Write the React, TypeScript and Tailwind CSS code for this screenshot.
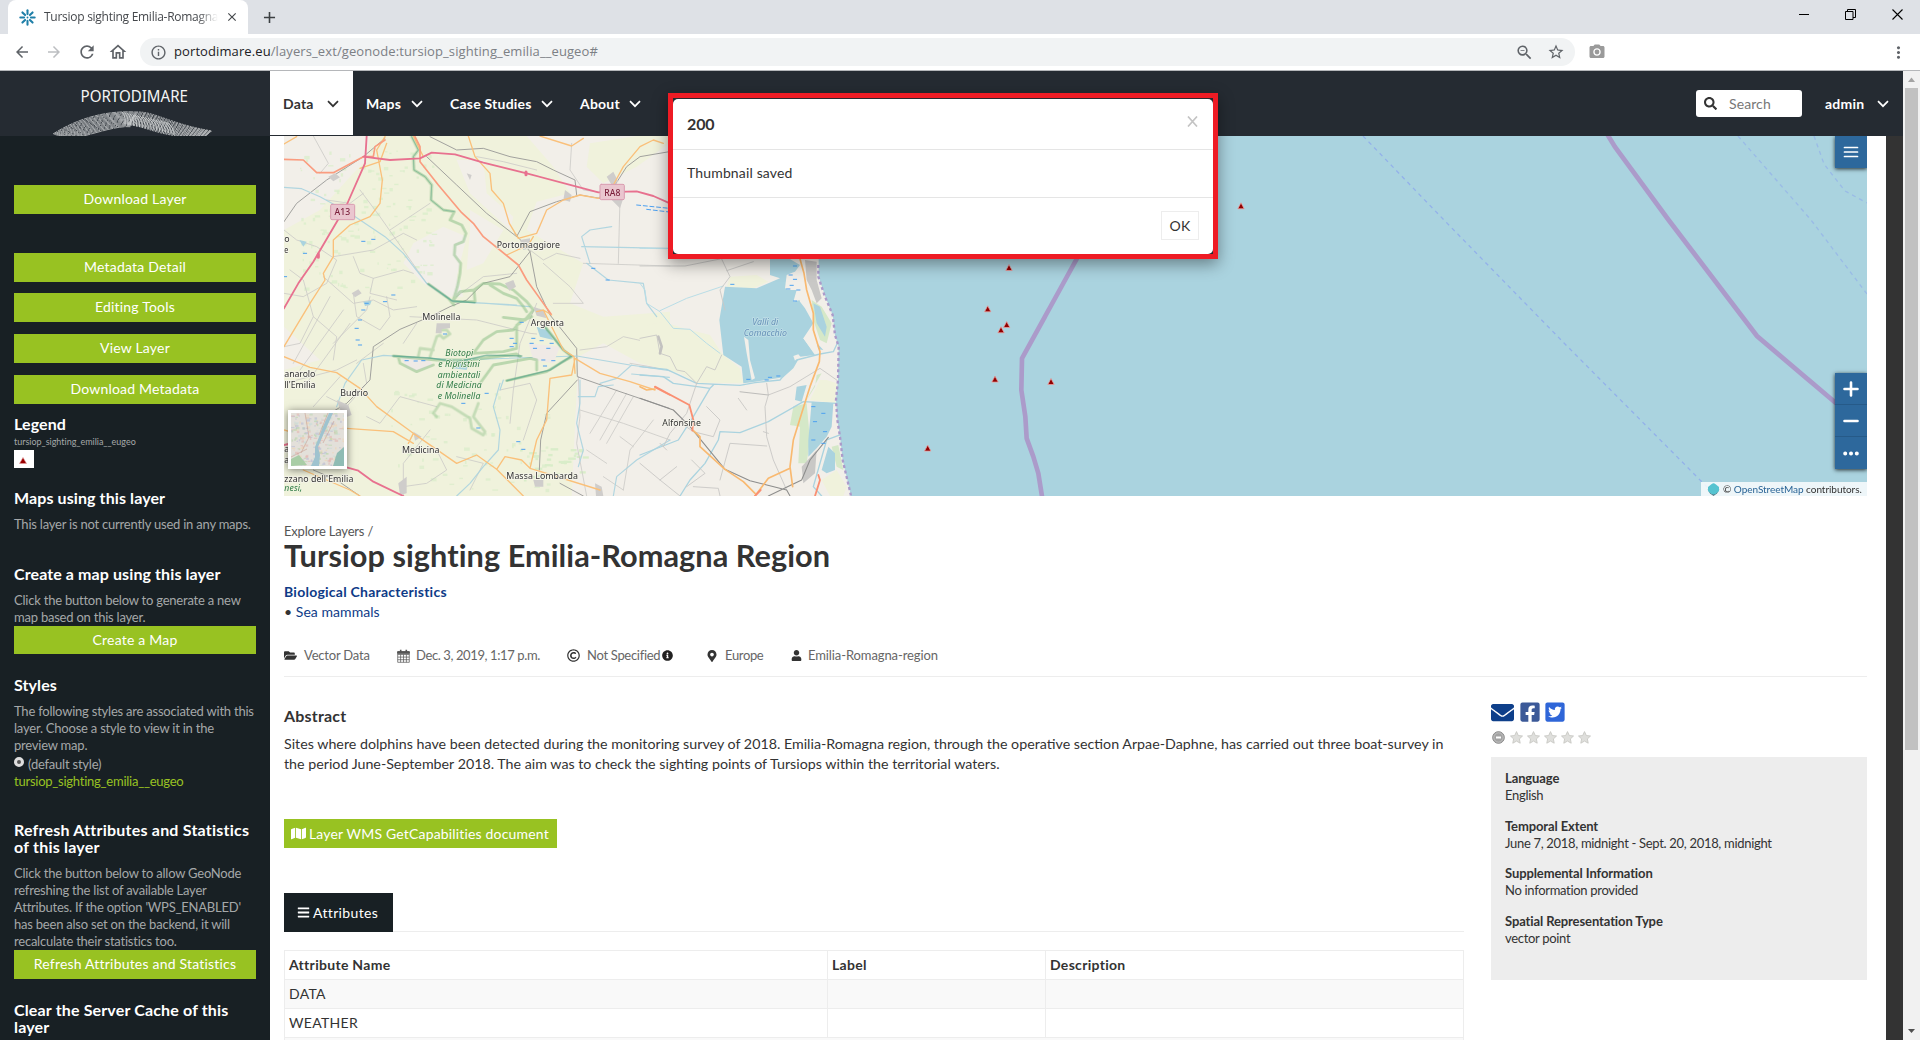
import type { ReactNode } from "react";
import {
  FaBars,
  FaEnvelope,
  FaFacebookSquare,
  FaFolderOpen,
  FaInfoCircle,
  FaMap,
  FaMapMarkerAlt,
  FaRegCopyright,
  FaSearch,
  FaTwitterSquare,
  FaUser,
} from "react-icons/fa";
import {
  MdAdd,
  MdArrowBack,
  MdArrowForward,
  MdCameraAlt,
  MdClose,
  MdInfoOutline,
  MdMoreVert,
  MdOutlineHome,
  MdOutlineZoomOut,
  MdRefresh,
  MdStarBorder,
} from "react-icons/md";

function Chevron() {
  return (
    <svg width="12" height="8" viewBox="0 0 12 8" fill="none" stroke="currentColor" strokeWidth="1.7">
      <path d="M1 1.2l5 5 5-5" />
    </svg>
  );
}

function Favicon() {
  return (
    <svg width="17" height="17" viewBox="-9 -9 18 18" stroke="#1f7fa8" strokeWidth="2.2" strokeLinecap="round">
      {[0, 45, 90, 135, 180, 225, 270, 315].map((a) => (
        <path key={a} d="M0 -3.6V-7.6" transform={`rotate(${a})`} />
      ))}
      <circle r="1" fill="#1f7fa8" stroke="none" />
    </svg>
  );
}

function BrowserChrome() {
  return (
    <div className="shrink-0 bg-[#dee1e6] font-['Open_Sans',sans-serif]">
      <div className="flex h-[34px] items-stretch">
        <div className="ml-2 flex w-60 items-center rounded-t-lg bg-white pl-[11px]">
          <Favicon />
          <div className="ml-2 w-[174px] overflow-hidden text-[12px] tracking-[-0.27px] whitespace-nowrap text-[#45484c] [mask-image:linear-gradient(to_right,black_88%,transparent)]">
            Tursiop sighting Emilia-Romagna
          </div>
          <MdClose className="ml-[7px] size-[14px] text-[#45484c]" />
        </div>
        <div className="flex w-[43px] items-center justify-center">
          <MdAdd className="size-[19px] text-[#3c4043]" />
        </div>
        <div className="ml-auto flex items-center pr-[17px] pb-[6px] text-black">
          <svg width="10" height="10" viewBox="0 0 10 10" stroke="currentColor">
            <path d="M0 5.5h10" />
          </svg>
          <svg className="ml-[36px]" width="11" height="11" viewBox="0 0 11 11" fill="none" stroke="currentColor">
            <path d="M.5 2.5h7.500v8h-7.500zM2.500 2.500v-2h8v8h-2.500" />
          </svg>
          <svg className="ml-[36px]" width="11" height="11" viewBox="0 0 11 11" fill="none" stroke="currentColor" strokeWidth="1.1">
            <path d="M.5 .5l10 10M10.500 .5l-10 10" />
          </svg>
        </div>
      </div>
      <div className="flex h-[37px] items-center border-b border-[#b5b7ba] bg-white pl-[13px] text-[#5f6368]">
        <MdArrowBack className="size-[18px]" />
        <MdArrowForward className="ml-[14px] size-[18px] text-[#bcbec1]" />
        <MdRefresh className="ml-[14px] size-[20px]" />
        <MdOutlineHome className="ml-[11px] size-[20px]" />
        <div className="ml-3 flex h-7 w-[1435px] items-center rounded-full bg-[#f1f3f4] pr-[10px] pl-[10px]">
          <MdInfoOutline className="size-[17px]" />
          <div className="ml-[7px] text-[13px] tracking-[0.1px] whitespace-nowrap text-[#7c8085]">
            <span className="text-[#202124]">portodimare.eu</span>/layers_ext/geonode:tursiop_sighting_emilia__eugeo#
          </div>
          <MdOutlineZoomOut className="ml-auto size-[19px]" />
          <MdStarBorder className="ml-[13px] size-[18px]" />
        </div>
        <MdCameraAlt className="ml-[13px] size-[18px] text-[#9a9a9a]" />
        <MdMoreVert className="mr-[12px] ml-auto size-[19px]" />
      </div>
    </div>
  );
}

function Logo() {
  const strands = Array.from({ length: 15 }, (_, i) => i);
  return (
    <svg width="270" height="65" viewBox="0 0 270 65">
      <text
        x="80.5"
        y="31"
        fontFamily="Noto Sans, sans-serif"
        fontSize="16.5"
        textLength="107.500"
        lengthAdjust="spacingAndGlyphs"
        fill="#f4f5f5"
      >
        PORTODIMARE
      </text>
      <g fill="none" stroke="#c9cccd">
        {strands.map((i) => (
          <path
            key={i}
            strokeWidth={0.8}
            strokeDasharray={`${5 + (i % 3) * 3} 0.7`}
            d={`M${53 + i * 1.1} ${63 + i * 0.4}C${72 + i * 1.3} ${51 + i * 0.95} ${100 + i * 1.1} ${39 + i * 1.100} ${136 - i * 0.4} ${41 + i * 1.05}`}
          />
        ))}
        {strands.map((i) => (
          <path
            key={`r${i}`}
            strokeWidth={0.8}
            strokeDasharray={`${2 + (i % 2)} 0.8`}
            d={`M${136 - i * 0.6} ${41 + i * 0.9}C${154 - i * 0.4} ${40 + i * 1.100} ${170 - i} ${53 + i * 0.9} ${212 - i * 0.6} ${60 + i * 0.5}`}
          />
        ))}
        {Array.from({ length: 18 }, (_, i) => (
          <path key={`h${i}`} strokeWidth="1" d={`M${122 + i * 2.6} ${41 + i * 0.600}q${4 + i * 0.2} 4 ${3 + i * 0.3} 12`} />
        ))}
      </g>
    </svg>
  );
}

function NavItem({ label, className }: { label: string; className: string }) {
  return (
    <div className={`flex h-[64px] items-center justify-between pt-[2px] text-[14px] leading-5 font-bold tracking-[0.22px] whitespace-nowrap ${className}`}>
      <span>{label}</span>
      <Chevron />
    </div>
  );
}

function Header() {
  return (
    <header className="flex h-[65px] shrink-0 bg-[#252b32] text-white">
      <Logo />
      <NavItem label="Data" className="w-[83px] bg-white pr-[14px] pl-[13px] text-[#333]" />
      <NavItem label="Maps" className="ml-[13px] w-[57px]" />
      <NavItem label="Case Studies" className="ml-[27px] w-[103px]" />
      <NavItem label="About" className="ml-[27px] w-[61px]" />
      <div className="mt-[19px] ml-auto flex h-[27px] w-[106px] items-center rounded-[3px] bg-white pl-2">
        <FaSearch className="size-[13px] text-[#333]" />
        <span className="ml-3 text-[14px] tracking-[0.1px] text-[#777]">Search</span>
      </div>
      <NavItem label="admin" className="mr-[14px] ml-[23px] w-[64px]" />
    </header>
  );
}

function SideButton({ children, className = "" }: { children: ReactNode; className?: string }) {
  return (
    <div className={`bg-[#98c222] text-center text-[14px] leading-[28px] tracking-[0.2px] text-white ${className}`}>
      {children}
    </div>
  );
}

function SideHeading({ children, className = "" }: { children: ReactNode; className?: string }) {
  return (
    <h4 className={`text-[16px] leading-[17px] font-bold tracking-[0.1px] whitespace-nowrap text-white ${className}`}>
      {children}
    </h4>
  );
}

function SideText({ children, className = "" }: { children: ReactNode; className?: string }) {
  return (
    <p className={`text-[13px] leading-[17px] tracking-[-0.22px] whitespace-nowrap text-[#a5a8a9] ${className}`}>
      {children}
    </p>
  );
}

function Sidebar() {
  return (
    <aside className="w-[270px] shrink-0 bg-[#182024] px-[14px] pt-[49px]">
      <SideButton className="h-[29px]">Download Layer</SideButton>
      <SideButton className="mt-[39px] h-[29px]">Metadata Detail</SideButton>
      <SideButton className="mt-[11px] h-[29px]">Editing Tools</SideButton>
      <SideButton className="mt-[12px] h-[29px]">View Layer</SideButton>
      <SideButton className="mt-[12px] h-[29px]">Download Metadata</SideButton>
      <SideHeading className="mt-[11px]">Legend</SideHeading>
      <p className="mt-1 text-[9px] leading-3 tracking-[-0.02px] text-[#a5a8a9]">tursiop_sighting_emilia__eugeo</p>
      <div className="mt-[2px] flex h-[18px] w-[20px] items-center justify-center bg-white">
        <svg className="mt-[3px] mr-[2px]" width="8" height="7" viewBox="0 0 8 7">
          <path d="M4 0.500L7.500 6.500H0.500z" fill="#900" stroke="#e9a0a0" strokeWidth="0.6" />
        </svg>
      </div>
      <SideHeading className="mt-[21px]">Maps using this layer</SideHeading>
      <SideText className="mt-[10px]">This layer is not currently used in any maps.</SideText>
      <SideHeading className="mt-[32px]">Create a map using this layer</SideHeading>
      <SideText className="mt-[10px]">
        Click the button below to generate a new
        <br />
        map based on this layer.
      </SideText>
      <SideButton className="h-[28px]">Create a Map</SideButton>
      <SideHeading className="mt-[22px]">Styles</SideHeading>
      <SideText className="mt-[10px]">
        The following styles are associated with this
        <br />
        layer. Choose a style to view it in the
        <br />
        preview map.
      </SideText>
      <div className="mt-[2px] flex h-[17px]">
        <span className="mt-px mr-1 size-[10px] rounded-full border-[3px] border-[#dedede] bg-[#555]" />
        <SideText>(default style)</SideText>
      </div>
      <p className="text-[13px] leading-[17px] tracking-[-0.24px] text-[#98c222]">tursiop_sighting_emilia__eugeo</p>
      <SideHeading className="mt-[31px] tracking-[0.22px]">
        Refresh Attributes and Statistics
        <br />
        of this layer
      </SideHeading>
      <SideText className="mt-[10px]">
        Click the button below to allow GeoNode
        <br />
        refreshing the list of available Layer
        <br />
        Attributes. If the option 'WPS_ENABLED'
        <br />
        has been also set on the backend, it will
        <br />
        recalculate their statistics too.
      </SideText>
      <SideButton className="h-[29px]">Refresh Attributes and Statistics</SideButton>
      <SideHeading className="mt-[22px] tracking-[0.15px]">
        Clear the Server Cache of this
        <br />
        layer
      </SideHeading>
    </aside>
  );
}

const sightings: [number, number][] = [
  [725, 131.7],
  [703.7, 173],
  [722.7, 188.7],
  [717, 194],
  [711, 243.3],
  [767, 245.7],
  [643.700, 312.300],
  [957, 70],
];

/* Deterministic speckle used for tree cover, wetland ticks and overview texture. */
function scatter(count: number, w: number, h: number, seed: number): [number, number][] {
  let s = seed;
  const next = () => {
    s = (s * 16807) % 2147483647;
    return s / 2147483647;
  };
  return Array.from({ length: count }, () => [next() * w, next() * h] as [number, number]);
}

function WestMap() {
  return (
    <g transform="translate(-14,-6) scale(0.33333)" fill="none" strokeLinejoin="round" strokeLinecap="round">
      <path
        fill="#f0f2dc"
        d="M300 18H770L850 110L900 190L800 215L770 300L940 400L900 520L1000 560L1200 545V690L1110 700L1000 640L925 680L905 1098H42V720L150 690L42 590V300L150 240L250 130L290 90z"
      />
      <path fill="#f2efe9" d="M430 340L520 290L590 320L560 440L580 500L520 500L460 460L400 400zM560 90L640 90L650 190L730 260L720 300L600 190zM600 240L700 300L640 400L590 420L600 300z" />
      <path fill="#f0f2dc" d="M960 40L1100 18H1198V40L1100 110L1000 160L950 110z" />
      <g fill="#d9edc9" stroke="none">
        {scatter(150, 440, 520, 77).map(([x, y], i) => (
          <rect key={i} x={90 + x * 0.9} y={60 + y * 0.8} width={4 + (i % 5) * 3} height={4 + (i % 3) * 3} opacity="0.75" />
        ))}
        {scatter(70, 480, 300, 991).map(([x, y], i) => (
          <rect key={i} x={360 + x} y={780 + y} width={5 + (i % 5) * 3} height={4 + (i % 3) * 3} opacity="0.700" />
        ))}
        {scatter(30, 200, 100, 31).map(([x, y], i) => (
          <rect key={i} x={750 + x} y={950 + y} width={8 + (i % 4) * 5} height={7} />
        ))}
      </g>
      <g stroke="#cccbc8" strokeWidth="2.5">
        <path d="M42 300L80 330L140 350L200 390L170 460L100 500L42 490M270 180L330 260L470 460M280 190L240 220L170 210M360 300L480 220M130 18L175 100L150 130M190 380L310 360L400 310L440 330M250 380L270 430L310 445L400 420L430 430M60 420L100 450L130 560L90 640L42 650M160 440L250 520L310 510L370 540L440 530M250 490L260 560L330 600L360 560L350 500M130 560L200 620L190 690M190 640L290 540L300 500M310 445L300 490L380 510M70 700L180 500M90 720L220 540M110 760L240 580" />
        <path d="M42 760L200 720L260 690M130 830L210 740M170 800L230 830L290 760L280 700M480 900L400 1000L400 1098M500 960L530 1020L470 1060L400 1070M290 860L330 880L390 800L500 830M420 560L620 570L780 610L800 612M800 520L750 640L730 780L720 880M560 500L640 440L740 430M440 580L400 640M340 640L260 700M690 780L780 760L800 810L760 930M560 980L640 1000L600 1080" />
        <path d="M905 40L900 120L940 180L1010 190M1050 205L1045 400M940 400L1200 408M780 360L820 390L860 370L930 385M820 400L900 470L940 520L850 520M930 660L1010 650L1060 620L1150 640L1160 680M1200 720L1080 700M925 740L930 860L920 940L950 1098M1070 790L990 930M1090 800L1010 940M1040 780L960 910M930 840L1060 880L1200 930M950 960L1010 1000M1050 920L1090 950M1000 1040L1060 1080M1150 870L1080 960L1060 1080M620 80L700 95L800 120" />
      </g>
      <g stroke="#9b9b99" strokeWidth="2.800">
        <path d="M42 275L80 220L170 150L280 80L345 25M470 80L560 165L650 250L740 320M740 320L780 245L860 215L930 195L990 205M735 310L780 365L720 440L640 460L590 510L540 530L480 560L390 598L310 650L300 750L230 820L180 850M780 365L800 470L840 555L920 655L922 740L1050 785L1198 835M922 750L830 850L812 930L808 1020M480 20L560 60L640 55L720 80L800 95L850 120L915 150L920 195M1035 165L1070 110L1110 80L1198 65M130 1020L200 1050L270 1098M870 1060L940 1098" />
      </g>
      <g stroke="#aad3df" strokeWidth="3.5">
        <path d="M42 172L95 176L150 200L240 250L345 320L400 370L470 460L550 515L740 525M200 830L225 760L275 690L340 676L560 690L920 678L1080 705L1200 722M560 515L650 520L780 530M690 760L670 830L690 900L685 960L640 1010L600 1060L560 1098M690 780L700 750M930 750L930 820L920 880L940 960L925 1010M925 800L975 800L985 770L1030 765M1085 705L1040 745L990 760M1085 732L1198 742M1025 290L960 300L935 320L960 400M950 400L1015 450L1120 460L1130 520L1160 560M1200 930L1100 990L1040 1040L1030 1098M935 350L1198 355" opacity="0.9" />
      </g>
      <path fill="#aad3df" d="M800 590L830 600L850 630L810 620zM88 330L110 335L100 350zM280 515L305 512L300 525L285 528zM560 700L600 690L590 720L550 715z" />
      <path fill="#efeae6" d="M395 685L470 680L490 705L440 722L410 715z M775 640L870 650L850 700L790 690z" />
      <g stroke="#85bc80" opacity="0.500" strokeWidth="8.500">
        <path d="M425 20L445 60L430 80L432 120L465 140L485 165L483 210L520 240L553 245L540 270L575 285L588 310L580 335L555 345L553 375L572 400L570 430L562 470L550 510" />
        <path d="M475 462L500 480L535 505L552 525M550 510L570 485L612 480L615 515L550 515M612 480L640 460L690 462L730 480L770 515L790 540L765 570L700 562M660 465L700 490L740 505L760 530L770 545" />
        <path d="M370 678L500 690L600 690L740 672L750 680M750 580L740 585L740 655L700 665L610 670L640 630L680 605L730 600L750 575L785 560M825 590L880 660L905 680L870 700L830 725L710 752M385 682L390 700L440 725L490 705M630 760L670 705L780 685L800 690L800 720" />
        <path d="M510 600L530 600L540 612L520 625L510 615L500 620L480 680M445 678L450 655L490 660M500 860L490 850L510 820L545 830L600 865L605 895L640 915L645 905L610 860L625 820" opacity="0.800" />
      </g>
      <g stroke="#4e9e86" strokeWidth="4.500" opacity="0.600">
        <path d="M475 462L545 512L615 518M370 678L480 684L560 696L650 676L755 678M710 752L840 720L905 678L880 660L825 592" />
        <path d="M425 20L445 60L430 80L432 120L465 140L485 165L483 210L520 240L553 245" strokeWidth="3" opacity="0.700" />
      </g>
      <g stroke="#4ba0f0" strokeWidth="3">
        {[
          [40, 440], [275, 334], [305, 328], [100, 370], [285, 520], [365, 495], [340, 515], [255, 595], [265, 570], [258, 630], [265, 645], [405, 692], [432, 693], [455, 692], [520, 612], [720, 625], [730, 640], [785, 625], [810, 632], [840, 640], [790, 655], [830, 655], [815, 690], [845, 692], [820, 708], [780, 640], [620, 894], [575, 820], [645, 790], [740, 935], [755, 958], [965, 415], [1008, 450], [275, 540], [720, 650], [750, 577],
        ].map(([x, y], i) => (
          <path key={i} d={`M${x} ${y}h10`} />
        ))}
        <path d="M1100 225L1198 235M1130 238L1198 246" strokeDasharray="12 8" />
      </g>
      <g fill="#cfcdcb" stroke="none">
        <path d="M175 140l20 -10l15 12l-20 12zM200 810l35 15l10 30l-25 10zM500 580h40v14l-25 4v12h-18zM750 330l30 -5v30l-20 5zM790 530l30 10l10 25l-30 -8zM1010 140l20 -15l15 30l-20 10zM1020 205h40l-10 30zM430 905l25 15l-20 12zM385 1060l25 -20v50l-20 5zM790 1050h30v20h-25zM1165 620l15 5l8 50l-20 -10zM975 1060l20 10l5 28h-22zM705 460l25 -10l8 20l-20 12zM245 490l20 -12l10 12l-20 12zM885 180l20 15l-5 20l-20 -5zM590 130l15 5l-5 15z" />
      </g>
      <g stroke="#fac07a" strokeWidth="4">
        <path d="M42 650L120 520L165 450L160 430L190 380L190 330L240 285L300 260L330 220L337 150L320 60L345 20M42 42L80 20M270 115L330 95L350 40M595 18L615 80L660 130L665 180L700 220L718 280L745 325L800 310L830 240L880 210L930 195M930 195L985 205L1000 195M1030 165L1060 110L1110 50L1150 30L1180 40M710 375L775 345L790 320M42 680L120 712L200 728L270 775L320 830L430 910L560 1000L620 975L680 1018L760 1098M230 895L370 905L430 940M430 910L415 940M680 1018L705 980L755 990L780 1015L990 1080M780 1015L800 930L830 870L840 745L905 735L915 685L990 730L1080 755L1155 780M820 540L850 600L880 660L912 680L915 730M430 18L460 80M810 18L905 48L940 25M800 545L820 540L845 555M42 900L60 905M100 1020L240 1080L270 1098" />
      </g>
      <g stroke="#fa9c7f" strokeWidth="5">
        <path d="M42 88L100 90L140 128L190 128L280 80L310 80L315 50L345 30M435 20L450 50L450 95L505 165L575 248L610 280L640 320L745 405L770 450L843 552M1155 772L1200 795" />
      </g>
      <g stroke="#e8718f" strokeWidth="5.500">
        <path d="M290 18L285 100L230 225L130 395L85 460L42 535M280 80L360 90L450 85L485 68L555 73L640 98L770 130L920 170L985 187L1100 184L1150 198L1200 220M230 1012L265 1022L310 1055L400 1098M42 945L55 942" />
        <path d="M145 372v10M768 126v8" strokeWidth="9" />
      </g>
      <g>
        <rect x="182" y="223" width="72" height="46" rx="4" fill="#eac6cf" stroke="#d99cb0" strokeWidth="3" />
        <rect x="990" y="163" width="73" height="46" rx="4" fill="#eac6cf" stroke="#d99cb0" strokeWidth="3" />
        <g fill="#7a1f3b" fontFamily="Noto Sans, sans-serif" fontSize="26" textAnchor="middle" fontWeight="500">
          <text x="217" y="256">A13</text>
          <text x="1027" y="197">RA8</text>
        </g>
      </g>
      <g fontFamily="Noto Sans, sans-serif" fontSize="26.500" fill="#333" stroke="#f6f5ec" strokeWidth="5" paintOrder="stroke">
        <text x="680" y="353" textLength="190">Portomaggiore</text>
        <text x="457" y="569" textLength="114">Molinella</text>
        <text x="782" y="588" textLength="100">Argenta</text>
        <text x="211" y="799" textLength="83">Budrio</text>
        <text x="396" y="968" textLength="112">Medicina</text>
        <text x="709" y="1048" textLength="215">Massa Lombarda</text>
        <text x="43" y="740" textLength="93">anarolo</text>
        <text x="43" y="773" textLength="93">ll'Emilia</text>
        <text x="43" y="336">o</text>
        <text x="43" y="368" textLength="12" lengthAdjust="spacingAndGlyphs">e</text>
        <text x="43" y="966">ar</text>
        <text x="43" y="1000">a</text>
        <text x="43" y="1055" textLength="207">zzano dell'Emilia</text>
      </g>
      <g fontFamily="Noto Sans, sans-serif" fontSize="26" fontStyle="italic" fill="#2f7a45" stroke="#eef3de" strokeWidth="4" paintOrder="stroke">
        <text x="526" y="679" textLength="84">Biotopi</text>
        <text x="505" y="711" textLength="124">e Ripristini</text>
        <text x="503" y="743" textLength="128">ambientali</text>
        <text x="499" y="775" textLength="136">di Medicina</text>
        <text x="503" y="808" textLength="128">e Molinella</text>
        <text x="43" y="1083" textLength="54">nesi,</text>
      </g>
    </g>
  );
}

function CoastMap() {
  return (
    <g transform="translate(356,104) scale(0.33333)" fill="none" strokeLinejoin="round" strokeLinecap="round">
      <path fill="#f0f2dc" d="M0 260L70 245L130 265L210 285L245 340L300 385L310 430L170 428L120 400L0 370zM270 110L350 105L385 125L340 145L260 140z" />
      <path
        fill="#aad3df"
        d="M536 -330V75L536 110L556 170L578 225L585 285L596 320L594 420L588 480L592 540L600 590L608 660L636 780H4000V-330z"
      />
      <path
        fill="#aad3df"
        d="M390 57H450L480 75L465 95L440 105L435 145L470 150L480 185L495 205L520 250L490 295L525 345L480 350L460 385L430 412L345 425L310 430L305 380L250 345L238 240L255 140L350 145L420 115L390 105z"
      />
      <path fill="#f2efe9" d="M312 290L325 300L330 360L345 415L335 420L320 340zM490 295L525 275L538 320L535 345L520 335zM440 130L450 110L475 100L480 180L460 185L470 150L440 150zM460 348L475 343L485 355L465 362z" />
      <path fill="#d5e8c8" d="M515 180L545 200L575 250L560 310L540 300L520 240zM545 400L510 460L490 500L500 480L525 440L530 405zM460 500L500 490L510 600L500 670H475L480 560L450 555z" />
      <path fill="#f0f2dc" d="M560 420L590 430L585 490L510 480L540 420zM545 720L590 690L620 740L610 768H570z" />
      <path fill="#d5e8c8" d="M575 620L595 615L610 690L590 680z" />
      <path fill="#aad3df" d="M520 190L540 200L560 260L555 290L530 250zM470 440L500 435L485 485L465 480zM515 485L580 490L575 560L560 590L530 625L505 650V600zM565 620L585 640V690L560 700L545 690zM530 308L550 330L535 328z" />
      <path fill="#c9c8c6" d="M495 60L530 65L530 120L545 175L530 190L515 150L500 120zM485 680L530 630L525 700L490 730z" />
      <g stroke="#aad3df" strokeWidth="4">
        <path d="M0 380L80 388L170 430L300 436L345 428L420 420L470 360L540 342L580 335L592 310M0 405L70 410L100 430L210 445L220 435M210 445L160 530L115 600L0 645M120 768L150 720L195 670L235 600L240 575L300 578L385 545L490 485L590 490M545 768L520 740L560 600L600 585" />
      </g>
      <g stroke="#b9dde6" strokeWidth="3">
        <path d="M0 25L80 26M0 130L15 150L20 190L60 215L100 265L150 268L200 310L240 340M60 212L140 175L250 138" />
      </g>
      <g stroke="#c8c7c5" strokeWidth="2.700">
        <path d="M0 78H135L240 57M245 57L270 110L240 150L255 210M260 92L340 65M0 295L50 285L60 340L90 350L110 390L135 395L170 430L200 380L225 390L245 345M170 430L140 520L90 580L70 620M200 500L240 540L220 590L160 575L110 540M385 465L375 500L380 590L400 660L440 750M295 475L320 510M240 720L270 610L380 618M155 660L195 700L140 740M0 670L60 720L120 768M60 720L110 680M380 430L385 465L450 440L540 385L590 420M60 610L80 630M370 575L385 580M160 740L235 745L240 768" />
      </g>
      <path stroke="#c3c2c0" strokeWidth="8" d="M55 290L65 320L60 340" />
      <g stroke="#8d8d8c" strokeWidth="3.200">
        <path d="M0 475L100 510L150 560L255 688L330 722L440 750L450 768M385 768L485 720L510 660L565 592" />
        <path d="M300 455L385 465" stroke="#bdbcba" />
      </g>
      <g stroke="#f9b970" strokeWidth="5">
        <path d="M480 57L492 100L500 150L520 220V270L540 335L538 365L510 440L485 520L460 600L450 680L458 740M450 685L385 715L345 768M160 572L180 590V620L255 688L310 725L345 760M0 440L20 450L45 447" />
      </g>
      <path stroke="#fa8f72" strokeWidth="5.500" d="M45 440L148 495L160 540L157 572M345 768L362 750M525 768L540 720L535 705" />
      <g stroke="#4ba0f0" strokeWidth="3">
        {[
          [460, 78], [447, 105], [460, 118], [450, 136], [470, 150], [460, 183], [272, 133], [320, 418], [375, 420], [385, 412], [410, 408], [515, 500], [545, 520], [520, 545], [550, 575], [515, 600], [440, 147], [545, 610],
        ].map(([x, y], i) => (
          <path key={i} d={`M${x} ${y}h10`} />
        ))}
      </g>
      <path
        stroke="#ab9bca"
        strokeWidth="7"
        strokeDasharray="9 8"
        strokeLinecap="butt"
        d="M535 75V110L553 165L578 225L585 285L596 320L594 420L588 480L592 540L600 590L608 660L636 780"
      />
      <path stroke="#ab9bca" strokeWidth="14" strokeLinecap="butt" d="M1340 0L1310 57L1146 355L1144 450L1156 530L1160 595L1180 650L1195 700L1207 775" />
      <text x="125" y="558" textAnchor="middle" fill="#333" stroke="#f6f5ec" strokeWidth="5" paintOrder="stroke" fontFamily="Noto Sans, sans-serif" fontSize="26.500" textLength="116">
        Alfonsine
      </text>
      <g fill="#6591b8" stroke="#c3e0e8" strokeWidth="4" paintOrder="stroke" fontFamily="Noto Sans, sans-serif" fontSize="26.500" fontStyle="italic" textAnchor="middle">
        <text x="376" y="255" textLength="78">Valli di</text>
        <text x="376" y="287" textLength="130">Comacchio</text>
      </g>
    </g>
  );
}

function OverviewThumb() {
  return (
    <svg width="53" height="53" viewBox="0 0 53 53">
      <rect width="53" height="53" fill="#e3e0da" />
      {scatter(260, 53, 53, 4242).map(([x, y], i) => (
        <rect
          key={i}
          x={x}
          y={y}
          width={1.5 + (i % 3)}
          height={1.2 + (i % 2)}
          opacity="0.600"
          fill={i % 5 === 0 ? "#b9d6ac" : i % 5 === 1 ? "#e3b5b0" : i % 5 === 2 ? "#b9bbd4" : i % 5 === 3 ? "#eed3b4" : "#c9dcd8"}
        />
      ))}
      <path d="M38 0L31 16L28 24L24 34L24 44L20 53H28L29 42L27 34L33 20L42 0z" fill="#9fc3cf" />
      <path d="M42 53L46 40L53 34V53z" fill="#8fbcb4" />
      <path d="M37 0L28 22M43 8L32 30M14 0L18 24L10 40M0 44L16 36" stroke="#c79f92" strokeWidth="0.6" fill="none" />
      <path d="M0 46L8 42L16 52L0 53z" fill="#a9cda6" />
    </svg>
  );
}

function MapButton({ children, last = false }: { children: ReactNode; last?: boolean }) {
  return (
    <div className={`flex h-8 w-8 items-center justify-center bg-[#2d689c] ${last ? "" : "border-b border-[#265a88]"}`}>
      <svg width="16" height="16" viewBox="0 0 16 16" fill="none" stroke="#fff" strokeWidth="2.6" strokeLinecap="round">
        {children}
      </svg>
    </div>
  );
}

function MapPanel() {
  return (
    <div className="relative h-[360px] w-[1583px] overflow-hidden bg-[#f2efe9]">
      <svg className="block" width="1583" height="360" viewBox="0 0 1583 360">
        <WestMap />
        <CoastMap />
        <g fill="none" stroke="#93b1ea" strokeWidth="1.3" strokeDasharray="4 4">
          <path d="M1079 0L1160 84L1280 207L1425 353" />
          <path d="M1454 0L1527 84L1583 158" opacity="0.700" />
          <path d="M1530 0L1540 28L1561 55L1583 67" opacity="0.700" />
        </g>
        <path d="M1322.500 -3L1331 11L1384.600 84L1473 200L1553 268" fill="none" stroke="#ab9bca" strokeWidth="4.700" />
        {sightings.map(([x, y]) => (
          <path key={`${x}-${y}`} transform={`translate(${x} ${y})`} d="M0 -3.200L3.200 2.800H-3.200z" fill="#900000" stroke="#e8a0a0" strokeWidth="0.8" />
        ))}
      </svg>
      <div className="absolute top-0 right-0 shadow-[0_1px_4px_rgba(0,0,0,0.8)]">
        <MapButton last>
          <path d="M1.500 3.500h13M1.500 8h13M1.500 12.500h13" strokeWidth="1.700" />
        </MapButton>
      </div>
      <div className="absolute top-[237px] right-0 shadow-[0_1px_4px_rgba(0,0,0,0.8)]">
        <MapButton>
          <path d="M1.500 8h13M8 1.500v13" />
        </MapButton>
        <MapButton>
          <path d="M1.500 8h13" />
        </MapButton>
        <MapButton last>
          <path d="M2.200 8.500h.01M8 8.500h.01M13.800 8.500h.01" strokeWidth="4" />
        </MapButton>
      </div>
      <div className="absolute top-[274px] left-[4px] border-[3px] border-white shadow-[0_1px_8px_rgba(0,0,0,0.5)]">
        <OverviewThumb />
      </div>
      <div className="absolute right-0 bottom-0 flex h-[14px] w-[166px] items-center bg-[rgba(255,255,255,0.8)] pl-[6px] text-[10px] leading-[14px] tracking-[-0.04px] whitespace-nowrap text-[#333]">
        <svg width="13" height="13" viewBox="0 0 13 13">
          <path d="M.6 6.500L3 10.500L6.500 13L10 10.500L12.400 6.500z" fill="#5b7a86" />
          <path d="M6.500 0.300Q8 .6 12 4V8Q9 11.300 6.500 11.600Q4 11.300 1 8V4Q5 .6 6.500 .3z" fill="#55c3d0" />
        </svg>
        <span className="ml-[3px]">
          © <span className="text-[#2a6496]">OpenStreetMap</span> contributors.
        </span>
      </div>
    </div>
  );
}

function CalendarIcon() {
  return (
    <svg width="13" height="14" viewBox="0 0 13 14" fill="none" stroke="#555">
      <path d="M.7 2.700h11.600v10.600H.7zM.7 5.500h11.600M.7 8.100h11.600M.7 10.700h11.600M3.600 5.500v7.800M6.500 5.500v7.800M9.400 5.500v7.800" strokeWidth="0.7" />
      <path d="M.7 2.700h11.600v1.600H.7z" fill="#555" />
      <path d="M3.700 .8v2.800M9.300 .8v2.800" strokeWidth="1.600" />
    </svg>
  );
}

function MetaItem({ icon, label, className = "" }: { icon: ReactNode; label: string; className?: string }) {
  return (
    <div className={`flex items-center whitespace-nowrap ${className}`}>
      <span className="text-[#333]">{icon}</span>
      <span>{label}</span>
    </div>
  );
}

const facts = [
  ["Language", "English"],
  ["Temporal Extent", "June 7, 2018, midnight - Sept. 20, 2018, midnight"],
  ["Supplemental Information", "No information provided"],
  ["Spatial Representation Type", "vector point"],
];

function AttributeTable() {
  const rows = ["DATA", "WEATHER"];
  return (
    <div className="mt-[18px] w-[1180px] border-t border-l border-[#ededed] text-[14px] tracking-[0.3px]">
      <div className="grid h-[29px] grid-cols-[543px_218px_418px] border-b border-[#ededed] leading-[28px] font-bold">
        <div className="border-r border-[#ededed] pl-1">Attribute Name</div>
        <div className="border-r border-[#ededed] pl-1">Label</div>
        <div className="border-r border-[#ededed] pl-1">Description</div>
      </div>
      {rows.map((name, i) => (
        <div
          key={name}
          className={`grid h-[29px] grid-cols-[543px_218px_418px] border-b border-[#ededed] leading-[28px] ${i % 2 === 0 ? "bg-[#f9f9f9]" : "bg-white"}`}
        >
          <div className="border-r border-[#ededed] pl-1">{name}</div>
          <div className="border-r border-[#ededed]" />
          <div className="border-r border-[#ededed]" />
        </div>
      ))}
      <div className="h-[29px] border-r border-[#ededed] bg-[#f9f9f9]" />
    </div>
  );
}

function Rating() {
  return (
    <div className="mt-[9px] flex h-[13px] items-center">
      <svg className="ml-px" width="13" height="13" viewBox="0 0 13 13">
        <circle cx="6.500" cy="6.500" r="5.800" fill="#a3a3a3" stroke="#868686" />
        <circle cx="6.500" cy="6.500" r="4.700" fill="none" stroke="#c6c6c6" strokeWidth="0.800" />
        <path d="M4 6.500h5" stroke="#fff" strokeWidth="2" />
      </svg>
      {[0, 1, 2, 3, 4].map((n) => (
        <svg key={n} className={n === 0 ? "ml-[5px]" : "ml-[4px]"} width="13" height="13" viewBox="0 0 13 13">
          <path d="M6.500 .6L8.300 4.500L12.500 5L9.400 7.900L10.200 12.200L6.500 10.100L2.800 12.200L3.600 7.900L.5 5L4.700 4.500z" fill="#dfdfdc" stroke="#c8c8c4" strokeWidth="0.900" />
        </svg>
      ))}
    </div>
  );
}

function MainContent() {
  return (
    <main className="w-[1616px] shrink-0 bg-white pl-[14px] text-[#333]">
      <MapPanel />
      <p className="mt-[27px] text-[13px] leading-[17px] tracking-[-0.2px] text-[#555]">Explore Layers /</p>
      <h1 className="text-[30.7px] leading-[32px] font-bold tracking-[0.05px] whitespace-nowrap">Tursiop sighting Emilia-Romagna Region</h1>
      <div className="mt-[10px] text-[14px] leading-5 tracking-[0.25px] text-[#0e3b87]">
        <div className="font-bold">Biological Characteristics</div>
        <div className="tracking-[0.05px]">
          <span className="text-[#333]">•</span> Sea mammals
        </div>
      </div>
      <div className="mt-[25px] flex h-[30px] w-[1583px] items-start border-b border-[#ededed] text-[13px] leading-[17px] tracking-[-0.35px] text-[#666]">
        <MetaItem className="w-[113px] tracking-[-0.2px]" icon={<FaFolderOpen className="mr-[7px] size-[13px]" />} label="Vector Data" />
        <MetaItem className="w-[170px] tracking-[-0.39px]" icon={<span className="mr-[6px] block"><CalendarIcon /></span>} label="Dec. 3, 2019, 1:17 p.m." />
        <div className="flex w-[139px] items-center tracking-[-0.3px]">
          <MetaItem icon={<FaRegCopyright className="mr-[7px] size-[13px]" />} label="Not Specified" />
          <FaInfoCircle className="ml-[2px] size-[11px] text-[#222]" />
        </div>
        <MetaItem className="w-[85px]" icon={<FaMapMarkerAlt className="mr-[7px] size-[12px]" />} label="Europe" />
        <MetaItem className="tracking-[-0.1px]" icon={<FaUser className="mr-[6px] size-[11px]" />} label="Emilia-Romagna-region" />
      </div>
      <div className="flex w-[1583px] justify-between">
        <section className="w-[1180px] pt-[29px]">
          <h4 className="text-[16px] leading-5 font-bold tracking-[0.2px]">Abstract</h4>
          <p className="mt-2 text-[14.25px] leading-5 whitespace-nowrap">
            Sites where dolphins have been detected during the monitoring survey of 2018. Emilia-Romagna region, through the operative
            section Arpae-Daphne, has carried out three boat-survey in
            <br />
            the period June-September 2018. The aim was to check the sighting points of Tursiops within the territorial waters.
          </p>
          <div className="mt-[45px] flex h-[29px] w-[273px] items-center bg-[#98c222] pb-px pl-[7px] text-[14px] tracking-[0.17px] whitespace-nowrap text-white">
            <FaMap className="mr-[3px] size-[15px]" />
            Layer WMS GetCapabilities document
          </div>
          <div className="mt-[45px] border-b border-[#ededed]">
            <div className="-mb-px flex h-[39px] w-[109px] items-center bg-[#182024] pb-px pl-[13px] text-[14px] tracking-[0.35px] text-white">
              <FaBars className="mr-[3px] size-[13px]" />
              Attributes
            </div>
          </div>
          <AttributeTable />
        </section>
        <aside className="w-[376px] pt-[25px]">
          <div className="flex h-[20px] items-center">
            <FaEnvelope className="size-[23px] text-[#0e3f8a]" />
            <FaFacebookSquare className="ml-[5px] size-[22px] text-[#3b5998]" />
            <FaTwitterSquare className="ml-[3px] size-[22px] text-[#2f66d8]" />
          </div>
          <Rating />
          <dl className="mt-[13px] flex h-[223px] flex-col gap-[13.7px] bg-[#ededed] pt-[13px] pl-[14px] text-[13px] leading-[17px]">
            {facts.map(([term, value]) => (
              <div key={term}>
                <dt className="font-bold tracking-[-0.11px]">{term}</dt>
                <dd className="tracking-[-0.31px]">{value}</dd>
              </div>
            ))}
          </dl>
        </aside>
      </div>
    </main>
  );
}

function Scrollbar() {
  return (
    <div className="flex w-[17px] shrink-0 flex-col items-center bg-[#f1f1f1]">
      <svg width="17" height="17" viewBox="0 0 17 17">
        <path d="M8.500 6.500L12 11H5z" fill="#a3a3a3" />
      </svg>
      <div className="h-[662px] w-[13px] bg-[#c1c1c1]" />
      <svg className="mt-auto" width="17" height="17" viewBox="0 0 17 17">
        <path d="M5 6h7L8.500 10z" fill="#505050" />
      </svg>
    </div>
  );
}

function ResultDialog() {
  return (
    <div className="absolute top-[93px] left-[668px] h-[166px] w-[550px] border-[5px] border-[#ee1b24] bg-[#252b32] shadow-[0_5px_15px_rgba(0,0,0,0.4)]">
      <div className="mt-px h-[155px] rounded-[5px] bg-white text-[#333]">
        <div className="flex h-[51px] items-center justify-between border-b border-[#e5e5e5] pr-[15px] pl-[14px]">
          <h4 className="text-[16px] leading-5 font-bold tracking-[-0.1px]">200</h4>
          <svg className="mb-[6px]" width="11" height="11" viewBox="0 0 11 11" stroke="#c4c4c4" strokeWidth="1.7">
            <path d="M1 .5l9 10M10 .5l-9 10" />
          </svg>
        </div>
        <div className="flex h-[48px] items-center border-b border-[#e5e5e5] pb-[2px] pl-[14px] text-[14px] tracking-[0.15px]">Thumbnail saved</div>
        <div className="flex justify-end pt-[13px] pr-[14px]">
          <button className="h-[29px] w-[38px] border border-[#ededed] bg-white text-[14px] leading-[27px] tracking-[0.3px]">OK</button>
        </div>
      </div>
    </div>
  );
}

export default function App() {
  return (
    <div className="relative flex h-[1040px] w-[1920px] flex-col overflow-hidden bg-white font-['Lato',sans-serif]">
      <BrowserChrome />
      <div className="flex min-h-0 flex-1">
        <div className="flex w-[1903px] flex-col">
          <Header />
          <div className="flex min-h-0 flex-1 overflow-hidden bg-[#333]">
            <Sidebar />
            <MainContent />
          </div>
        </div>
        <Scrollbar />
      </div>
      <ResultDialog />
    </div>
  );
}
